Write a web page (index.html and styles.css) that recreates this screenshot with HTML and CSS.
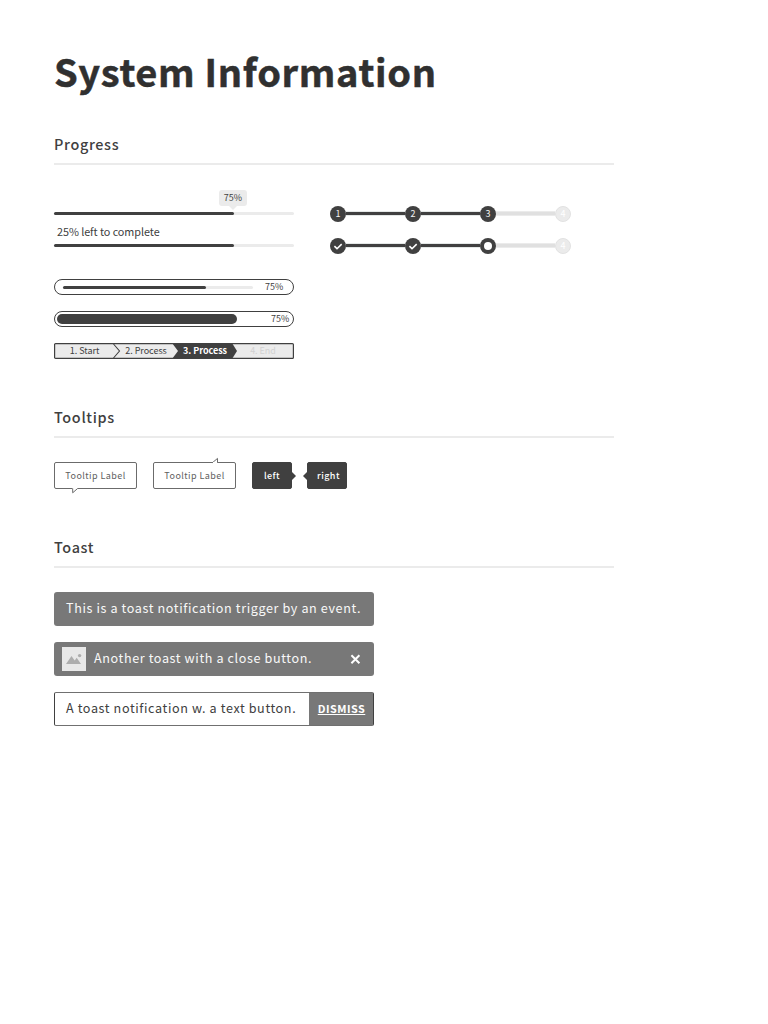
FILE: index.html
```html
<!DOCTYPE html>
<html lang="en">
<head>
<meta charset="utf-8">
<title>System Information</title>
<link rel="stylesheet" href="styles.css">
</head>
<body>
<main class="page">
  <h1 class="title">System Information</h1>

  <section class="section section-progress">
    <h2 class="heading">Progress</h2>
    <div class="progress-grid">
      <div class="bars">
        <div class="bubble-row"><span class="bubble">75%</span></div>
        <div class="track"><div class="fill"></div></div>
        <p class="caption">25% left to complete</p>
        <div class="track"><div class="fill"></div></div>
        <div class="pill pill-thin">
          <div class="track thin-track"><div class="fill"></div></div>
          <span class="percent">75%</span>
        </div>
        <div class="pill pill-thick">
          <div class="thick-fill"></div>
          <span class="percent">75%</span>
        </div>
        <div class="wizard">
          <svg class="wizard-shape" viewBox="0 0 240 16">
            <rect x=".6" y=".6" width="238.8" height="14.8" rx="1" fill="#ebebeb" stroke="#404040" stroke-width="1.2"/>
            <path d="M59.5 1 L65.5 8 L59.5 15" fill="none" stroke="#404040" stroke-width="1.1"/>
            <path d="M118 0 H178 L183 8 L178 16 H118 L124 8 Z" fill="#404040"/>
          </svg>
          <span class="wizard-step step-start">1. Start</span>
          <span class="wizard-step step-second">2. Process</span>
          <span class="wizard-step step-current">3. Process</span>
          <span class="wizard-step step-end">4. End</span>
        </div>
      </div>
      <div class="steppers">
        <div class="stepper">
          <span class="dot">1</span><span class="line"></span>
          <span class="dot">2</span><span class="line"></span>
          <span class="dot">3</span><span class="line line-off"></span>
          <span class="dot dot-off">4</span>
        </div>
        <div class="stepper">
          <span class="dot"><svg class="check" viewBox="0 0 16 16"><path d="M4.4 8.2 L7 10.7 L11.7 6.1"/></svg></span><span class="line"></span>
          <span class="dot"><svg class="check" viewBox="0 0 16 16"><path d="M4.4 8.2 L7 10.7 L11.7 6.1"/></svg></span><span class="line"></span>
          <span class="dot"><span class="hole"></span></span><span class="line line-off"></span>
          <span class="dot dot-off">4</span>
        </div>
      </div>
    </div>
  </section>

  <section class="section section-tooltips">
    <h2 class="heading">Tooltips</h2>
    <div class="tooltips">
      <div class="tip">Tooltip Label
        <svg class="tail tail-down" viewBox="0 0 8 6"><path d="M1.5 0 V1 H6.5 V0Z" fill="#fff"/><path d="M1.7 .5 V4.8 L6.6 .5" fill="#fff" stroke="#6b6b6b"/></svg>
      </div>
      <div class="tip">Tooltip Label
        <svg class="tail tail-up" viewBox="0 0 8 6"><path d="M1.7 5.5 L6.5 1.4 V5.5" fill="#fff" stroke="#6b6b6b"/><path d="M2 5 H6 V6 H2Z" fill="#fff"/></svg>
      </div>
      <div class="tip tip-dark">left
        <svg class="tail tail-right" viewBox="0 0 4 8"><path d="M0 0 L4 4 L0 8Z" fill="#404040"/></svg>
      </div>
      <div class="tip tip-dark tip-from-left">right
        <svg class="tail tail-left" viewBox="0 0 4 8"><path d="M4 0 L0 4 L4 8Z" fill="#404040"/></svg>
      </div>
    </div>
  </section>

  <section class="section">
    <h2 class="heading">Toast</h2>
    <div class="toasts">
      <div class="toast"><span class="toast-text">This is a toast notification trigger by an event.</span></div>
      <div class="toast toast-media">
        <svg class="thumb" viewBox="0 0 24 24"><path d="M0 0H24V24H0Z" fill="#e8e8e8"/><path d="M4 17 L9.5 9 L12.7 13.4 L14.7 10.8 L19 17Z" fill="#adadad"/><circle cx="17.6" cy="8.6" r="1.7" fill="#adadad"/></svg>
        <span class="toast-text">Another toast with a close button.</span>
        <svg class="close" viewBox="0 0 10 10"><path d="M1.4 1.2 L9.4 9.2 M9.4 1.2 L1.4 9.2" stroke="#fff" stroke-width="2"/></svg>
      </div>
      <div class="toast toast-outline">
        <span class="toast-text">A toast notification w. a text button.</span>
        <span class="dismiss">DISMISS</span>
      </div>
    </div>
  </section>
</main>
</body>
</html>
```

FILE: styles.css
```css
* { box-sizing: border-box; }
body {
  margin: 0;
  background: #fff;
  color: #404040;
  font-family: "Noto Sans CJK SC", "Noto Sans", sans-serif;
}
svg { display: block; overflow: visible; }
.page { width: 614px; padding: 40px 0 0 54px; }
.title {
  margin: 0;
  height: 60px;
  line-height: 62px;
  font-size: 38px;
  font-weight: 700;
  letter-spacing: .65px;
  -webkit-text-stroke: .5px #303030;
  color: #303030;
  white-space: nowrap;
}
.section-progress { height: 273px; }
.section-tooltips { height: 130px; }
.title + .section { margin-top: 34px; }
.heading {
  margin: 0;
  height: 31px;
  line-height: 20px;
  border-bottom: 2px solid #ebebeb;
  font-size: 14.4px;
  font-weight: 500;
  letter-spacing: .67px;
}
.progress-grid { display: flex; gap: 36px; padding-top: 25px; }
.bars { width: 240px; display: flex; flex-direction: column; }
.bubble-row { height: 22px; padding-left: 165px; }
.bubble {
  position: relative;
  display: block;
  width: 28px;
  height: 16px;
  border-radius: 3px;
  background: #ebebeb;
  text-align: center;
  font-size: 9px;
  line-height: 16px;
}
.bubble::after {
  content: "";
  position: absolute;
  left: 10px;
  top: 16px;
  border: 4px solid transparent;
  border-top-color: #ebebeb;
  border-bottom: 0;
}
.track { height: 3px; border-radius: 2px; background: #ebebeb; }
.fill { width: 75%; height: 3px; border-radius: 2px; background: #404040; }
.caption {
  margin: 0;
  padding-left: 3px;
  height: 29px;
  font-size: 10.8px;
  line-height: 33px;
  letter-spacing: -.05px;
}
.pill {
  display: flex;
  align-items: center;
  height: 16px;
  border: 1px solid #404040;
  border-radius: 8px;
  font-size: 9px;
  line-height: 14px;
}
.pill-thin { margin-top: 32px; padding-left: 8px; gap: 12px; }
.thin-track { width: 190px; }
.pill-thick { margin-top: 16px; padding-left: 2px; gap: 34px; }
.thick-fill { width: 180px; height: 10px; border-radius: 5px; background: #404040; }
.wizard {
  position: relative;
  display: flex;
  margin-top: 16px;
  height: 16px;
  font-size: 9px;
  line-height: 15px;
  letter-spacing: -.03px;
  white-space: nowrap;
}
.wizard-shape { position: absolute; left: 0; top: 0; width: 240px; height: 16px; }
.wizard-step { position: relative; text-align: center; }
.step-start { width: 61px; }
.step-second { width: 62px; }
.step-current { width: 56px; color: #fff; font-weight: 700; }
.step-end { width: 60px; color: #d2d2d2; }
.steppers { display: flex; flex-direction: column; gap: 16px; padding-top: 16px; }
.stepper { display: flex; align-items: center; height: 16px; }
.dot {
  display: flex;
  align-items: center;
  justify-content: center;
  width: 16px;
  height: 16px;
  border-radius: 50%;
  background: #404040;
  color: #f2f2f2;
  font-size: 9px;
  line-height: 16px;
}
.dot-off { background: #ebebeb; border: 1px solid #e2e2e2; color: #fff; }
.line {
  width: 59px;
  height: 5px;
  background: #404040;
  border: solid #e4e8e7;
  border-width: 1px 0;
  margin-top: -1px;
}
.line-off { background: #e0e0e0; border-color: #ebebeb; }
.check { width: 16px; height: 16px; fill: none; stroke: #fff; stroke-width: 1.6; }
.hole { width: 8px; height: 8px; border-radius: 50%; background: #fff; }
.tooltips { display: flex; gap: 16px; padding-top: 24px; }
.tip {
  position: relative;
  width: 83px;
  height: 27px;
  border: 1px solid #6b6b6b;
  border-radius: 2px;
  text-align: center;
  font-size: 9px;
  line-height: 25px;
  letter-spacing: .43px;
  color: #606060;
  white-space: nowrap;
}
.tip-dark {
  width: 40px;
  border-color: #404040;
  background: #404040;
  color: #fff;
  font-weight: 500;
}
.tip-from-left { margin-left: -1px; padding-left: 3px; }
.tail { position: absolute; }
.tail-down { left: 16px; top: 25px; width: 8px; height: 6px; }
.tail-up { left: 57px; top: -6px; width: 8px; height: 6px; }
.tail-right { left: 39px; top: 9px; width: 4px; height: 8px; }
.tail-left { left: -5px; top: 9px; width: 4px; height: 8px; }
.toasts { display: flex; flex-direction: column; gap: 16px; padding-top: 24px; }
.toast {
  display: flex;
  align-items: center;
  width: 320px;
  height: 34px;
  padding-left: 12px;
  border-radius: 3px;
  background: #787878;
  color: #f8f8f8;
  font-size: 12.6px;
  line-height: 32px;
  white-space: nowrap;
}
.toast-text { height: 34px; letter-spacing: .61px; }
.toast-media { padding-left: 8px; }
.thumb { width: 24px; height: 24px; margin-right: 8px; }
.close { width: 10px; height: 10px; margin: 0 14px 0 auto; }
.toast-outline {
  padding-left: 11px;
  border: 1px solid #707070;
  border-left-color: #404040;
  border-right-color: #404040;
  border-radius: 2px;
  background: #fff;
  color: #404040;
}
.dismiss {
  width: 64px;
  height: 32px;
  padding-left: 1px;
  margin-left: auto;
  background: #787878;
  color: #fff;
  text-align: center;
  font-size: 10.8px;
  line-height: 31px;
  font-weight: 700;
  letter-spacing: .5px;
  text-decoration: underline;
}
```
